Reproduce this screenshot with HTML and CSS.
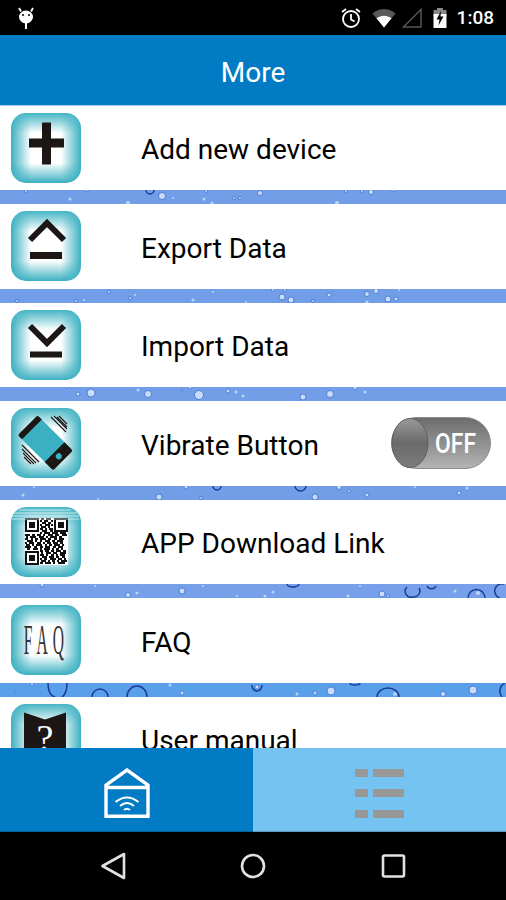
FILE: index.html
```html
<!DOCTYPE html>
<html lang="en">
<head>
<meta charset="utf-8">
<title>More</title>
<link rel="stylesheet" href="styles.css">
</head>
<body>
<div class="app">
  <div class="status">
    <svg width="18" height="22" viewBox="0 0 18 22"><path class="wh" d="M9 3.500a7 6.500 0 0 1 7 6.500a7 6.500 0 0 1-14 0a7 6.500 0 0 1 7-6.500z"/><path class="ln" d="M4 4.500L2 1M14 4.500L16 1"/><rect class="wh" x="8" y="15" width="2" height="7"/><circle cx="6" cy="8" r="1" fill="#000"/><circle cx="12" cy="8" r="1" fill="#000"/></svg>
    <div class="status-right">
      <svg class="st-ic" width="22" height="22" viewBox="0 0 22 22"><circle class="ln" cx="11" cy="12" r="8"/><path class="ln" d="M11 7v5.500l3.500 2M2 5l4-3M20 5l-4-3"/></svg>
      <svg class="st-ic wifi" width="24" height="20" viewBox="0 0 24 20"><path fill="#fff" d="M12 19.500L23.500 5.500C16.500-.5 7.500-.5.500 5.500z" opacity=".35"/><path fill="#fff" d="M12 19.500L19.500 10.300C14.800 6.800 9.200 6.800 4.500 10.300z"/></svg>
      <svg class="st-ic sig" width="20" height="20" viewBox="0 0 20 20"><path d="M1.500 19L19 1.500V19z" fill="none" stroke="#555" stroke-width="1.500"/></svg>
      <svg class="st-ic bat" width="14" height="20" viewBox="0 0 14 20"><path fill="#888" d="M4 0h6v2h3.500v6H.5V2H4z"/><path fill="#fff" d="M.5 6h13v14H.5z"/><path fill="#000" d="M8 3L3.500 11.500H6.500L5.500 17.500L10.500 8.500H7.500z"/></svg>
      <span class="time">1:08</span>
    </div>
  </div>
  <header class="top">More</header>
  <main class="list">
    <div class="row">
      <div class="icon"><svg width="70" height="70" viewBox="0 0 70 70"><path class="blk" d="M31 9.500h9v42h-9zM18 25.500h35v9H18z"/></svg></div>
      <span class="label">Add new device</span>
    </div>
    <div class="strip s1"><svg width="506" height="14" viewBox="0 0 506 14"><g class="drops"><circle cx="26" cy="1" r="1.500"/><circle cx="87" cy="0" r="1.500"/><circle cx="162" cy="6" r="3.500"/><circle cx="206" cy="1" r="1.500"/><circle cx="224" cy="2" r="1.500"/><circle cx="234" cy="8" r="1.500"/><circle cx="240" cy="8" r="1.500"/><circle cx="260" cy="3" r="2.500"/><circle cx="346" cy="1" r="1.500"/><circle cx="362" cy="1" r="1.500"/><circle cx="371" cy="2" r="2.500"/><circle cx="393" cy="0" r="1.500"/></g><g class="faint"><circle cx="70" cy="9" r="1.500"/><circle cx="173" cy="8" r="1"/><circle cx="204" cy="9" r="1.500"/><circle cx="128" cy="13" r="2"/><circle cx="212" cy="13" r="1.500"/><circle cx="337" cy="13" r="2"/></g><g class="arcs"><path d="M146 0a4 4 0 0 0 8 0"/></g></svg></div>
    <div class="row">
      <div class="icon"><svg width="70" height="70" viewBox="0 0 70 70"><path class="stk" d="M19 29L36 12L53 29"/><path class="blk" d="M19 41h32v7H19z"/></svg></div>
      <span class="label">Export Data</span>
    </div>
    <div class="strip s1"><svg width="506" height="14" viewBox="0 0 506 14"><g class="drops"><circle cx="17" cy="12" r="1.500"/><circle cx="76" cy="12" r="1.500"/><circle cx="109" cy="3" r="1.500"/><circle cx="130" cy="9" r="1.500"/><circle cx="273" cy="1" r="1.500"/><circle cx="285" cy="1" r="1.500"/><circle cx="282" cy="8" r="3"/><circle cx="291" cy="11" r="3"/><circle cx="313" cy="12" r="1.500"/><circle cx="329" cy="6" r="2"/><circle cx="367" cy="5" r="2.500"/><circle cx="376" cy="2" r="2.500"/><circle cx="388" cy="10" r="3"/><circle cx="396" cy="10" r="2"/></g><g class="faint"><circle cx="84" cy="11" r="1"/><circle cx="135" cy="6" r="1"/><circle cx="193" cy="11" r="1.500"/><circle cx="213" cy="3" r="1"/><circle cx="246" cy="13" r="1"/><circle cx="367" cy="13" r="1.500"/><circle cx="399" cy="1" r="1"/></g></svg></div>
    <div class="row">
      <div class="icon"><svg width="70" height="70" viewBox="0 0 70 70"><path class="stk" d="M19 16L36 33L53 16"/><path class="blk" d="M19 41.500h32v6H19z"/></svg></div>
      <span class="label">Import Data</span>
    </div>
    <div class="strip s1"><svg width="506" height="14" viewBox="0 0 506 14"><g class="drops"><circle cx="67" cy="0" r="1.500"/><circle cx="78" cy="7" r="2"/><circle cx="91" cy="6" r="4"/><circle cx="148" cy="7" r="3.500"/><circle cx="182" cy="3" r="1"/><circle cx="190" cy="0" r="2"/><circle cx="199" cy="8" r="4.500"/><circle cx="228" cy="4" r="2"/><circle cx="303" cy="10" r="3"/><circle cx="330" cy="7" r="3.500"/><circle cx="355" cy="0" r="2.500"/></g><g class="faint"><circle cx="138" cy="3" r="1.500"/><circle cx="236" cy="5" r="1.500"/><circle cx="243" cy="9" r="1.500"/><circle cx="365" cy="5" r="1.500"/></g></svg></div>
    <div class="row">
      <div class="icon"><svg width="70" height="70" viewBox="0 0 70 70"><g transform="rotate(-45 34 34.500)"><rect x="20" y="11" width="28" height="47" rx="2" fill="#3bb0c2"/><path class="blk" d="M22 10h24a2 2 0 0 1 2 2v4H20v-4a2 2 0 0 1 2-2zM20 48h28v10a2 2 0 0 1-2 2H22a2 2 0 0 1-2-2z"/><circle cx="34" cy="54" r="3" fill="#3bb0c2"/></g><path class="hatch" d="M40 9L55 24M43 8L56 21M46 9L56 19M48 8L56 16M11 37L28 54M11 41L25 55M12 45L23 56M13 49L20 56"/></svg></div>
      <span class="label">Vibrate Button</span>
      <svg class="toggle" width="100" height="52" viewBox="0 0 100 52"><defs><linearGradient id="tg" x1="0" y1="0" x2="0" y2="1"><stop offset="0" stop-color="#6c6c6c"/><stop offset=".5" stop-color="#8f8f8f"/><stop offset="1" stop-color="#b4b4b4"/></linearGradient><linearGradient id="kn" x1="0" y1="0" x2="0" y2="1"><stop offset="0" stop-color="#9a9a9a"/><stop offset=".5" stop-color="#6a6a6a"/><stop offset="1" stop-color="#7d7d7d"/></linearGradient></defs><rect x=".5" y=".5" width="99" height="51" rx="25.500" fill="url(#tg)" stroke="#8a8a8a"/><ellipse cx="19" cy="26" rx="18" ry="24.500" fill="url(#kn)" stroke="#5f5f5f"/><text class="off" x="44" y="36" textLength="41" lengthAdjust="spacingAndGlyphs">OFF</text></svg>
    </div>
    <div class="strip s1"><svg width="506" height="14" viewBox="0 0 506 14"><g class="drops"><circle cx="159" cy="11" r="3"/><circle cx="186" cy="1" r="2"/><circle cx="201" cy="12" r="1.500"/><circle cx="315" cy="11" r="3"/><circle cx="339" cy="1" r="2.500"/><circle cx="349" cy="5" r="1.500"/><circle cx="367" cy="9" r="2"/><circle cx="459" cy="7" r="2"/></g><g class="faint"><circle cx="23" cy="9" r="1.500"/><circle cx="34" cy="1" r="1"/><circle cx="98" cy="13" r="1"/><circle cx="415" cy="1" r="1"/><circle cx="467" cy="2" r="1.500"/></g><g class="arcs"><path d="M213 0a4 4 0 0 0 8 0"/><path d="M295 0a5.500 5 0 0 0 11 0"/></g></svg></div>
    <div class="row">
      <div class="icon icon-qr"><svg width="70" height="70" viewBox="0 0 70 70"><rect x="14" y="11" width="43" height="47" fill="#fff"/><path class="qr" d="M14 11h14v14H14zM43 11h14v14H43zM14 44h14v14H14z"/><path fill="#fff" d="M16 13h10v10H16zM45 13h10v10H45zM16 46h10v10H16z"/><path class="qr" d="M18 15h6v6h-6zM47 15h6v6h-6zM18 48h6v6h-6z"/><path class="qrl" d="M30 12h3m2 0h5M29 14h2m2 0h4m3 0h2M31 16h4m2 0h3M29 18h2m3 0h5m1 0h2M30 20h5m2 0h2M29 22h3m2 0h2m2 0h4M31 24h5m3 0h3M29 26h2m2 0h6m2 0h6m2 0h6M14 28h5m2 0h3m2 0h4m2 0h2m3 0h5m2 0h4m3 0h5M15 30h2m2 0h6m3 0h5m2 0h2m2 0h7m2 0h3M14 32h3m3 0h2m2 0h3m2 0h6m2 0h3m3 0h3m2 0h5M16 34h6m2 0h2m3 0h2m3 0h5m2 0h3m2 0h6M14 36h2m2 0h5m3 0h4m2 0h2m2 0h4m2 0h5m2 0h3M15 38h4m2 0h2m2 0h6m3 0h2m2 0h3m2 0h6m2 0h2M14 40h6m3 0h3m3 0h3m2 0h5m3 0h3m2 0h5M16 42h3m3 0h5m2 0h2m2 0h6m2 0h2m2 0h3m2 0h2M29 44h3m2 0h4m2 0h3m2 0h5m2 0h3M30 46h2m3 0h5m2 0h4m3 0h6M29 48h4m2 0h2m3 0h3m2 0h2m2 0h5M31 50h5m2 0h5m2 0h3m3 0h3M29 52h2m2 0h3m3 0h6m2 0h4m2 0h2M30 54h5m2 0h2m2 0h3m2 0h2m2 0h6M29 56h3m2 0h6m2 0h2m3 0h7"/><path class="streak" d="M8 3H60M3 6H66M1 9H68M1 12H68"/></svg></div>
      <span class="label">APP Download Link</span>
    </div>
    <div class="strip s5"><svg width="506" height="14" viewBox="0 0 506 14"><g class="drops"><circle cx="42" cy="1" r="2"/><circle cx="128" cy="11" r="2.500"/><circle cx="182" cy="7" r="3"/><circle cx="382" cy="10" r="3"/><circle cx="388" cy="12" r="1.500"/></g><g class="faint"><circle cx="95" cy="2" r="1"/><circle cx="137" cy="9" r="1.500"/><circle cx="203" cy="2" r="1"/><circle cx="237" cy="12" r="1"/><circle cx="265" cy="12" r="1.500"/><circle cx="273" cy="8" r="1.500"/><circle cx="348" cy="12" r="1.500"/><circle cx="360" cy="2" r="1"/><circle cx="455" cy="7" r="1.500"/><circle cx="478" cy="9" r="2"/></g><g class="arcs"><path d="M287 0a6 3 0 0 0 12 0"/><path d="M407 3a6 6 0 0 0 6 10a6 6 0 0 0 6-9"/><path d="M427 2a5 5 0 0 0 9 0"/><path d="M468 14a8 8 0 0 1 17 0"/><path d="M500 14a7 7 0 0 1 4-14"/></g></svg></div>
    <div class="row">
      <div class="icon"><span class="faq">FAQ</span></div>
      <span class="label">FAQ</span>
    </div>
    <div class="strip s6"><svg width="506" height="14" viewBox="0 0 506 14"><g class="drops"><circle cx="32" cy="1" r="1.500"/><circle cx="15" cy="10" r="1"/><circle cx="182" cy="10" r="2"/><circle cx="257" cy="4" r="2"/><circle cx="315" cy="10" r="2"/><circle cx="331" cy="8" r="4"/><circle cx="473" cy="7" r="4"/><circle cx="443" cy="11" r="2.500"/></g><g class="faint"><circle cx="170" cy="2" r="1.500"/><circle cx="297" cy="11" r="1.500"/><circle cx="395" cy="11" r="2"/></g><g class="arcs"><path d="M48 0c0 9 3 13 7 14M67 0c0 8-2 12-5 14"/><path d="M92 14a8 8 0 1 1 16 0"/><path d="M127 14a10 11 0 1 1 20 0"/><path d="M252 2a5 6 0 0 0 10 0"/><path d="M350 0a5 2 0 0 0 10 0"/><path d="M377 14a11 9 0 0 1 22 0"/><path d="M502 14a9 9 0 0 1 3-14"/></g></svg></div>
    <div class="row">
      <div class="icon"><svg width="70" height="70" viewBox="0 0 70 70"><path class="blk" d="M13 8.500L34 15.500L55 8.500V66H13z"/><text class="qm" x="34" y="47">?</text></svg></div>
      <span class="label">User manual</span>
    </div>
  </main>
  <nav class="tabs">
    <div class="tab tab-on">
      <svg width="46" height="50" viewBox="0 0 46 50"><path class="tl" d="M2 48.200V17L23 2L44 17V48.200zM2 19.500H44"/><path class="tw" d="M11.500 34Q23 25 34.500 34M16 38Q23 32 30 38M20 42Q23 39.500 26 42"/></svg>
    </div>
    <div class="tab tab-off">
      <div class="lines">
        <i class="ln-bar"></i><i class="ln-bar"></i>
        <i class="ln-bar"></i><i class="ln-bar"></i>
        <i class="ln-bar"></i><i class="ln-bar"></i>
      </div>
    </div>
  </nav>
  <footer class="sysnav">
    <svg width="26" height="28" viewBox="0 0 26 28"><path class="nv" d="M2.500 14L24 2V26z"/></svg>
    <svg width="26" height="26" viewBox="0 0 26 26"><circle class="nv" cx="13" cy="13" r="11"/></svg>
    <svg width="26" height="26" viewBox="0 0 26 26"><rect class="nv" x="3" y="2.500" width="21" height="21" rx="1.500"/></svg>
  </footer>
</div>
</body>
</html>
```
FILE: styles.css
```css
* { box-sizing: border-box; }
html, body { margin: 0; padding: 0; background: #000; }
.app {
  width: 506px; height: 900px;
  display: flex; flex-direction: column;
  overflow: hidden;
  font-family: Roboto, "Noto Sans", sans-serif;
}
.status {
  height: 35px; flex: none; background: #000;
  display: flex; align-items: center; justify-content: space-between;
  padding: 0 12px 0 17px;
}
.wh { fill: #fff; }
.ln { fill: none; stroke: #fff; stroke-width: 1.800; }
.status-right { display: flex; align-items: center; }
.st-ic { display: block; }
.wifi { margin-left: 10px; }
.sig { margin-left: 6px; }
.bat { margin-left: 11px; }
.time { margin-left: 10px; color: #fff; font-size: 19px; font-weight: 500; }
.top {
  height: 70px; flex: none; background: #007bc4; color: #fff;
  font-size: 28px; padding-top: 4px;
  display: flex; align-items: center; justify-content: center;
}
.list { flex: 1; min-height: 0; overflow: hidden; background: #fff; }
.row {
  height: 84.5px; background: #fff;
  display: flex; align-items: center;
  padding: 0 15px 0 11px;
}
.row:first-child { height: 85px; box-shadow: inset 0 1px 0 #a9cdf0; }
.icon {
  width: 70px; height: 70px; flex: none;
  border-radius: 15px;
  background:
    linear-gradient(to bottom, #45b5c4, rgba(69,181,196,.6) 8px, rgba(69,181,196,0) 20px),
    linear-gradient(to top, #3bb0c1, rgba(59,176,193,.6) 8px, rgba(59,176,193,0) 20px),
    linear-gradient(to right, #3bb0c1, rgba(59,176,193,.6) 8px, rgba(59,176,193,0) 20px),
    linear-gradient(to left, #3bb0c1, rgba(59,176,193,.6) 8px, rgba(59,176,193,0) 20px),
    #fff;
  display: flex; align-items: center; justify-content: center;
  overflow: hidden;
}
.icon svg { display: block; flex: none; }
.blk { fill: #1c1614; }
.stk { fill: none; stroke: #1c1614; stroke-width: 6; }
.hatch { fill: none; stroke: #1c1614; stroke-width: 1.100; }
.qr { fill: #111; }
.qrl { fill: none; stroke: #111; stroke-width: 2; }
.streak { fill: none; stroke: #e6f6f7; stroke-width: 1; opacity: .75; }
.qm { fill: #fff; font-family: "Liberation Serif", serif; font-size: 38px; text-anchor: middle; }
.faq {
  flex: none; display: block; white-space: nowrap;
  font-family: "Liberation Serif", serif; font-size: 42px; color: #333;
  letter-spacing: 14px; transform: scaleX(.37);
}
.label { margin-left: 60px; padding-top: 4px; font-size: 28px; color: #000; white-space: nowrap; flex: 1; }
.toggle { flex: none; display: block; }
.off { fill: #fff; font-family: Roboto, sans-serif; font-size: 28px; font-weight: 500; }
.strip { height: 14px; overflow: hidden; }
.strip svg { display: block; }
.s1 { background: #729ee8; }
.s5 { background: #76a1ea; }
.s6 { background: #5a9fea; }
.drops circle { fill: #c9ddfa; stroke: #3f6fd0; stroke-width: .8; }
.faint circle { fill: #dce9fb; opacity: .7; }
.arcs path { fill: none; stroke: #173c9c; stroke-width: 1.500; }
.tabs { height: 84px; flex: none; display: flex; }
.tab {
  flex: 1; padding-top: 7px;
  display: flex; align-items: center; justify-content: center;
  border-bottom: 1px solid rgba(0,0,0,.2);
}
.tab-on { background: #007bc4; }
.tab-off { background: #75c3f1; }
.tl { fill: none; stroke: #fff; stroke-width: 3.400; }
.tw { fill: none; stroke: #fff; stroke-width: 2; }
.lines { display: grid; grid-template-columns: 13px 31px; column-gap: 5px; row-gap: 12.500px; }
.ln-bar { display: block; height: 8px; background: #989898; }
.sysnav {
  height: 68px; flex: none; background: #000;
  display: flex; align-items: center; justify-content: space-between;
  padding: 0 100px;
}
.nv { fill: none; stroke: #e2e2e2; stroke-width: 2.600; stroke-linejoin: round; }
```
